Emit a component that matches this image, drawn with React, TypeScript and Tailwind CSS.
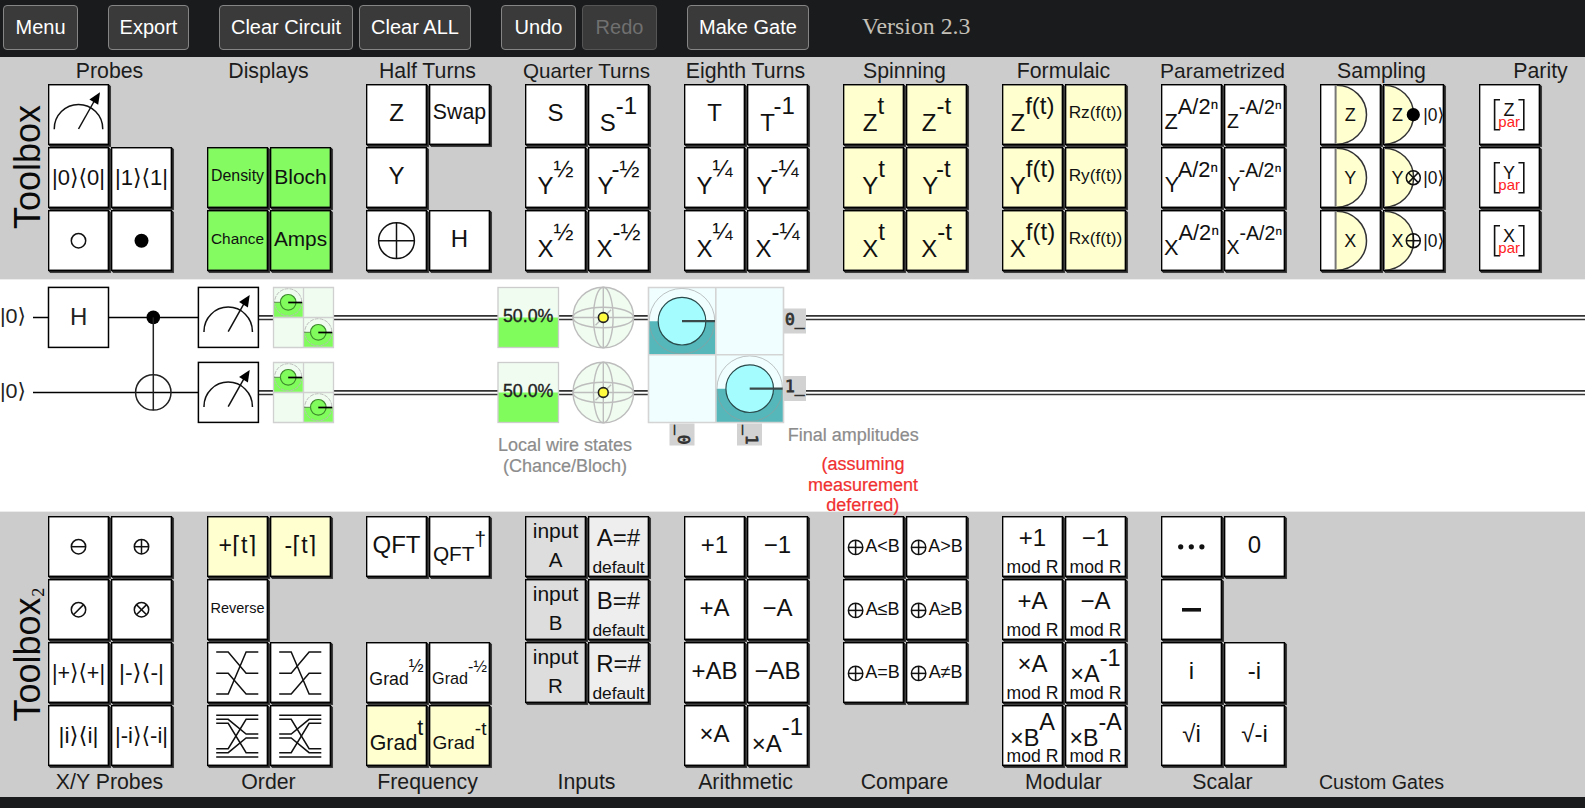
import React from "react";

type Tone = "white" | "yellow" | "green" | "input" | "fallback";

interface Gate {
  tone?: Tone;
  face: React.ReactNode;
}

const TONES: Record<Tone, string> = {
  white: "bg-white",
  yellow: "bg-[#ffffd0]",
  green: "bg-[#84fc61]",
  input: "bg-[#dddddd]",
  fallback: "bg-[#eeeeee]",
};

/* ---------- gate faces ---------- */

const Label = ({ children, size = 24 }: { children: string; size?: number }) => (
  <span className="pb-[3px] leading-none whitespace-nowrap" style={{ fontSize: size }}>
    {children}
  </span>
);

const Face = ({ children }: { children: React.ReactNode }) => (
  <svg viewBox="0 0 61 61" className="h-[61px] w-[61px] shrink-0" fill="none" stroke="none">
    {children}
  </svg>
);

const Txt = ({
  x = 30.5,
  y,
  size = 24,
  w,
  fill = "#111",
  children,
}: {
  x?: number;
  y: number;
  size?: number;
  w?: number;
  fill?: string;
  children: React.ReactNode;
}) => (
  <text
    x={x}
    y={y}
    fontSize={size}
    fill={fill}
    textAnchor="middle"
    textLength={w}
    lengthAdjust={w ? "spacingAndGlyphs" : undefined}
  >
    {children}
  </text>
);

const Power = ({ base, exp, size = 24, y }: { base: string; exp: string; size?: number; y?: number }) => (
  <Face>
    <Txt y={y ?? 30.2 + size * 0.7} size={size}>
      {base}
      <tspan dy={-size * 0.69}>{exp}</tspan>
    </Txt>
  </Face>
);

const Ket = ({ text, width }: { text: string; width: number }) => (
  <Face>
    <Txt y={37.7} size={22.5} w={width}>
      {text}
    </Txt>
  </Face>
);

const Ring = ({ x = 30.5, y = 30.7, r = 7.2, kind = "" }: { x?: number; y?: number; r?: number; kind?: string }) => {
  const d = r * 0.707;
  return (
    <g stroke="#111" strokeWidth="1.5">
      <circle cx={x} cy={y} r={r} />
      {(kind === "-" || kind === "+") && <path d={`M${x - r} ${y}H${x + r}`} />}
      {kind === "+" && <path d={`M${x} ${y - r}V${y + r}`} />}
      {(kind === "/" || kind === "x") && <path d={`M${x - d} ${y + d}L${x + d} ${y - d}`} />}
      {kind === "x" && <path d={`M${x - d} ${y - d}L${x + d} ${y + d}`} />}
    </g>
  );
};

const Control = ({ kind }: { kind: string }) => (
  <Face>
    <Ring kind={kind} />
  </Face>
);

const Meter = () => (
  <g stroke="#111" strokeWidth="1.5">
    <path d="M6.3 45.3V44.6A24.2 24.2 0 0 1 54.7 44.6V45.3" />
    <path d="M30.5 45L46.3 17" />
    <path d="M52 8.2L41.4 15.4L50.2 20.8Z" fill="#000" stroke="none" />
  </g>
);

const Shuffle = ({ paths }: { paths: number[][] }) => (
  <Face>
    <g stroke="#111" strokeWidth="1.5">
      {paths.map(([a, b], i) => (
        <path key={i} d={`M9.2 ${a}H21.2L39.1 ${b}H51.3`} />
      ))}
    </g>
  </Face>
);

const Inputs = ({ name }: { name: string }) => (
  <Face>
    <Txt y={22.3} size={21}>input</Txt>
    <Txt y={50.8} size={20.5}>{name}</Txt>
  </Face>
);

const Default = ({ name }: { name: string }) => (
  <Face>
    <Txt y={30}>{name + "=#"}</Txt>
    <Txt y={57} size={17.4}>default</Txt>
  </Face>
);

const Mod = ({ base, exp, y = 29.7, size = 24, rise = 16.5 }: { base: string; exp?: string; y?: number; size?: number; rise?: number }) => (
  <Face>
    <Txt y={y} size={size}>
      {base}
      {exp && <tspan dy={-rise}>{exp}</tspan>}
    </Txt>
    <Txt y={57} size={17.6}>mod R</Txt>
  </Face>
);

const Compare = ({ op }: { op: string }) => (
  <Face>
    <Ring x={12.6} y={31.4} r={7.2} kind="+" />
    <Txt x={39.6} y={36} size={18}>{"A" + op + "B"}</Txt>
  </Face>
);

const Detector = ({ axis }: { axis: string }) => (
  <Face>
    <path d="M15.7 1.2A30 29.5 0 0 1 15.7 60.2Z" fill="#ffffd0" />
    <path d="M16.5 1.2A30 29.5 0 0 1 16.5 60.2" stroke="#333" strokeWidth="1.5" />
    <path d="M15.6 1V60" stroke="#777" strokeWidth="2" />
    <Txt x={30.2} y={37} size={18}>{axis}</Txt>
  </Face>
);

const Reset = ({ axis, kind }: { axis: string; kind: string }) => (
  <Face>
    <path d="M1 1.2A29.6 29.5 0 0 1 1 60.2Z" fill="#ffffd0" />
    <path d="M1 1.2A29.6 29.5 0 0 1 1 60.2" stroke="#333" strokeWidth="1.5" />
    <path d="M1.4 1V60" stroke="#777" strokeWidth="1.2" />
    <Txt x={14.6} y={37} size={18}>{axis}</Txt>
    {kind === "dot" ? <circle cx={30.3} cy={30.7} r={6.6} fill="#000" /> : <Ring x={30.3} r={7} kind={kind} />}
    <Txt x={50.7} y={37} size={18} w={21}>|0⟩</Txt>
  </Face>
);

const Parity = ({ axis }: { axis: string }) => (
  <Face>
    <path d="M21 15.8H15.6V45.8H21M39.4 15.8H44.8V45.8H39.4" stroke="#111" strokeWidth="1.6" />
    <Txt x={30} y={32.4} size={18}>{axis}</Txt>
    <Txt x={30.2} y={43} size={15} fill="#f22">par</Txt>
  </Face>
);

const g = (face: React.ReactNode, tone: Tone = "white"): Gate => ({ face, tone });
const t = (text: string, size?: number, tone: Tone = "white"): Gate => g(<Label size={size}>{text}</Label>, tone);
const p = (base: string, exp: string, size?: number, tone: Tone = "white"): Gate =>
  g(<Power base={base} exp={exp} size={size} />, tone);

/* ---------- toolbox data ---------- */

interface Group {
  title: string;
  titleSize?: number;
  gates: (Gate | null)[];
}

const TOP: Group[] = [
  {
    title: "Probes",
    gates: [
      g(<Face><Meter /></Face>), null,
      g(<Ket text="|0⟩⟨0|" width={53} />), g(<Ket text="|1⟩⟨1|" width={53} />),
      g(<Control kind="" />), g(<Face><circle cx="30.5" cy="30.7" r="7" fill="#000" /></Face>),
    ],
  },
  {
    title: "Displays",
    gates: [null, null, t("Density", 15.9, "green"), t("Bloch", 21, "green"), t("Chance", 15.4, "green"), t("Amps", 20.8, "green")],
  },
  {
    title: "Half Turns",
    gates: [t("Z"), t("Swap", 21.3), t("Y"), null, g(<Face><Ring r={17.9} kind="+" /></Face>), t("H")],
  },
  {
    title: "Quarter Turns",
    titleSize: 20.6,
    gates: [t("S"), p("S", "-1"), p("Y", "½"), p("Y", "-½"), p("X", "½"), p("X", "-½")],
  },
  {
    title: "Eighth Turns",
    gates: [t("T"), p("T", "-1"), p("Y", "¼"), p("Y", "-¼"), p("X", "¼"), p("X", "-¼")],
  },
  {
    title: "Spinning",
    gates: ["Z", "Y", "X"].flatMap((a) => [p(a, "t", 24, "yellow"), p(a, "-t", 24, "yellow")]),
  },
  {
    title: "Formulaic",
    gates: ["Z", "Y", "X"].flatMap((a) => [p(a, "f(t)", 24, "yellow"), t(`R${a.toLowerCase()}(f(t))`, 17.3, "yellow")]),
  },
  {
    title: "Parametrized",
    titleSize: 21,
    gates: ["Z", "Y", "X"].flatMap((a) => [p(a, "A/2ⁿ", 21.8), p(a, "-A/2ⁿ", 19.5)]),
  },
  {
    title: "Sampling",
    gates: [["Z", "dot"], ["Y", "x"], ["X", "+"]].flatMap(([a, k]) => [g(<Detector axis={a} />), g(<Reset axis={a} kind={k} />)]),
  },
  {
    title: "Parity",
    gates: ["Z", "Y", "X"].flatMap((a) => [g(<Parity axis={a} />), null]),
  },
];

const cycle = [[10, 31.3], [31.3, 52], [52, 10]];
const interleave = [[10.3, 10.3], [14.3, 29], [18.3, 47.7], [43.7, 14.3], [47.7, 33], [52, 52]];
const flip = (paths: number[][]) => paths.map(([a, b]) => [b, a]);

const BOTTOM: Group[] = [
  {
    title: "X/Y Probes",
    gates: [
      g(<Control kind="-" />), g(<Control kind="+" />),
      g(<Control kind="/" />), g(<Control kind="x" />),
      g(<Ket text="|+⟩⟨+|" width={53} />), g(<Ket text="|-⟩⟨-|" width={45} />),
      g(<Ket text="|i⟩⟨i|" width={40} />), g(<Ket text="|-i⟩⟨-i|" width={53} />),
    ],
  },
  {
    title: "Order",
    gates: [
      g(<Face><Txt y={37.3} w={38}>+⌈t⌉</Txt></Face>, "yellow"), g(<Face><Txt y={37.3} w={32}>-⌈t⌉</Txt></Face>, "yellow"),
      t("Reverse", 14.5), null,
      g(<Shuffle paths={cycle} />), g(<Shuffle paths={flip(cycle)} />),
      g(<Shuffle paths={interleave} />), g(<Shuffle paths={flip(interleave)} />),
    ],
  },
  {
    title: "Frequency",
    gates: [
      t("QFT"), p("QFT", "†", 20.8),
      null, null,
      p("Grad", "½", 17.8), p("Grad", "-½", 16.2),
      p("Grad", "t", 21.4, "yellow"), p("Grad", "-t", 19, "yellow"),
    ],
  },
  {
    title: "Inputs",
    gates: [...["A", "B", "R"].flatMap((a) => [g(<Inputs name={a} />, "input"), g(<Default name={a} />, "fallback")]), null, null],
  },
  {
    title: "Arithmetic",
    gates: [t("+1"), t("−1"), t("+A"), t("−A"), t("+AB"), t("−AB"), t("×A"), p("×A", "-1")],
  },
  {
    title: "Compare",
    gates: [...["<", ">", "≤", "≥", "=", "≠"].map((op) => g(<Compare op={op} />)), null, null],
  },
  {
    title: "Modular",
    gates: [
      g(<Mod base="+1" />), g(<Mod base="−1" />),
      g(<Mod base="+A" />), g(<Mod base="−A" />),
      g(<Mod base="×A" />), g(<Mod base="×A" exp="-1" y={40.3} size={23.5} />),
      g(<Mod base="×B" exp="A" y={41} size={23.5} />), g(<Mod base="×B" exp="-A" y={41} size={23.2} />),
    ],
  },
  {
    title: "Scalar",
    gates: [
      g(<Face>{[19.7, 30.3, 40.9].map((x) => <circle key={x} cx={x} cy={30.8} r={2.6} fill="#111" />)}</Face>), t("0"),
      g(<Face><path d="M21 30.8H40" stroke="#111" strokeWidth="3.6" /></Face>), null,
      t("i"), t("-i"),
      t("√i"), t("√-i"),
    ],
  },
  { title: "Custom Gates", titleSize: 19.6, gates: [] },
];

/* ---------- layout pieces ---------- */

const Caption = ({ children, size = 21.3 }: { children: string; size?: number }) => (
  <div className="flex justify-center pr-px leading-6 whitespace-nowrap text-[#1c1c1c]" style={{ fontSize: size }}>
    {children}
  </div>
);

const GateGrid = ({ gates }: { gates: (Gate | null)[] }) => (
  <div className="grid grid-cols-[61px_61px] auto-rows-[61px] gap-[2px]">
    {gates.map((gate, i) =>
      gate ? (
        <div
          key={i}
          className={`flex items-center justify-center overflow-hidden outline-1 -outline-offset-1 outline-black shadow-[inset_0_0_0_1.4px_#222,1px_1px_0_0.2px_#222,1.5px_1.5px_0.5px_#444] ${TONES[gate.tone ?? "white"]}`}
        >
          {gate.face}
        </div>
      ) : (
        <div key={i} />
      )
    )}
  </div>
);

const SideTitle = ({ children }: { children: React.ReactNode }) => (
  <div className="flex w-12 shrink-0 items-center justify-center pl-[7px]">
    <div className="rotate-180 text-[36px] leading-[40px] whitespace-nowrap text-[#0a0a0a] [writing-mode:vertical-rl]">
      {children}
    </div>
  </div>
);

const BUTTONS = [
  { name: "Menu", cls: "w-[75px]" },
  { name: "Export", cls: "ml-[30px] w-[81px]" },
  { name: "Clear Circuit", cls: "ml-[30px] w-[134px]" },
  { name: "Clear ALL", cls: "ml-[6px] w-[112px]" },
  { name: "Undo", cls: "ml-[30px] w-[75px]" },
  { name: "Redo", cls: "ml-[6px] w-[75px]", disabled: true },
  { name: "Make Gate", cls: "ml-[30px] w-[122px]" },
];

const TopBar = () => (
  <header className="flex h-[57px] shrink-0 items-start bg-[#1a1b1c] pt-[5px] pl-[3px]">
    {BUTTONS.map((b) => (
      <button
        key={b.name}
        disabled={b.disabled}
        className={`h-[45px] shrink-0 rounded-[4px] border bg-[#3a3a3a] pb-[2px] text-[20px] whitespace-nowrap ${b.cls} ${
          b.disabled ? "border-[#555] text-[#707070]" : "border-[#858585] text-white"
        }`}
      >
        {b.name}
      </button>
    ))}
    <span className="ml-[53px] font-['Liberation_Serif',serif] text-[23.8px] leading-[43px] text-[#c4c0b8]">Version 2.3</span>
  </header>
);

/* ---------- circuit ---------- */

const Wire = ({ y }: { y: number }) => (
  <>
    <path d={`M33 ${y}H198`} stroke="#000" strokeWidth="1.5" />
    <path d={`M259 ${y - 1.5}H1585M259 ${y + 2.1}H1585`} stroke="#333" strokeWidth="1.6" />
    <text x="0" y={y + 5.8} fontSize="21" fill="#222" textLength="26" lengthAdjust="spacingAndGlyphs">|0⟩</text>
  </>
);

const DensityCell = ({ x, y }: { x: number; y: number }) => (
  <g>
    <path d={`M${x - 14.6} ${y}h29.2v14.6h-29.2z`} fill="#80fc5c" />
    <circle cx={x} cy={y} r="13.6" stroke="#bbb" strokeDasharray="4 1" />
    <circle cx={x} cy={y} r="7.8" fill="#80fc5c" stroke="#3d8a2c" strokeWidth="1.2" />
    <path d={`M${x - 14.6} ${y}h6.8`} stroke="#5a8a4c" strokeWidth="1" />
    <path d={`M${x} ${y + 0.2}h14`} stroke="#000" strokeWidth="1.7" />
  </g>
);

const Density = ({ y }: { y: number }) => (
  <g>
    <rect x="273.5" y={y - 30} width="60" height="60" fill="#f0fcf0" />
    <DensityCell x={288.2} y={y - 15.2} />
    <DensityCell x={318.3} y={y + 14.8} />
    <path d={`M273.5 ${y - 30}h60v60h-60zM303.5 ${y - 30}v60M273.5 ${y}h60`} stroke="#d0d0d0" strokeWidth="1.3" />
  </g>
);

const Chance = ({ y }: { y: number }) => (
  <g>
    <rect x="498" y={y - 30} width="60.5" height="60" fill="#f0fcf0" />
    <rect x="498" y={y} width="60.5" height="30" fill="#80fc5c" />
    <rect x="498" y={y - 30} width="60.5" height="60" stroke="#ccc" strokeWidth="1.3" />
    <text x="528.2" y={y + 4.8} fontSize="17.8" fill="#222" stroke="#222" strokeWidth="0.35" textAnchor="middle">50.0%</text>
  </g>
);

const Bloch = ({ y }: { y: number }) => (
  <g stroke="#bdbdbd" strokeWidth="1.4">
    <circle cx="603.3" cy={y} r="30.3" fill="#f0fcf0" />
    <ellipse cx="603.3" cy={y} rx="30.3" ry="10.3" />
    <ellipse cx="603.3" cy={y} rx="9.8" ry="30.3" />
    <path d={`M573 ${y}h60.6M603.3 ${y - 30.3}v60.6M595.5 ${y + 7.8}l15.6 -15.6`} />
    <circle cx="603.3" cy={y} r="4.9" fill="#fffc40" stroke="#222" strokeWidth="1.6" />
  </g>
);

const AmpCell = ({ x, y }: { x: number; y: number }) => (
  <g>
    <path d={`M${x - 33.5} ${y}h67.5v33.7h-67.5z`} fill="#55b7ba" />
    <circle cx={x} cy={y} r="32.8" stroke="#999" strokeOpacity="0.6" />
    <circle cx={x} cy={y} r="23.8" fill="#a4fcff" stroke="#2a4a4b" strokeWidth="1.2" />
    <path d={`M${x} ${y}h33.5`} stroke="#3a4a4b" strokeWidth="2.2" />
  </g>
);

const Amplitudes = () => (
  <g>
    <rect x="648.5" y="287.5" width="135" height="135" fill="#f0feff" />
    <AmpCell x={682} y={321.2} />
    <AmpCell x={749.7} y={388.7} />
    <path d="M648.5 287.5h135v135h-135zM715.8 287.5v135M648.5 354.8h135" stroke="#d4d4d4" strokeWidth="1.6" />
    <g fill="#d2d2d2">
      <rect x="784" y="308.5" width="22" height="25" />
      <rect x="784" y="376" width="22" height="25" />
      <rect x="669.5" y="423.5" width="25" height="22" />
      <rect x="737" y="423.5" width="25" height="22" />
    </g>
    <g fill="#333" stroke="#333" strokeWidth="0.8" fontSize="16.3" className="font-['DejaVu_Sans_Mono',monospace]">
      <text x="785" y="324.6">0_</text>
      <text x="785" y="392.2">1_</text>
      <text transform="translate(678.3,425) rotate(90)">_0</text>
      <text transform="translate(745.8,425) rotate(90)">_1</text>
    </g>
  </g>
);

const Circuit = () => (
  <section className="relative z-10 h-[233px] shrink-0 border-y border-[#ececec] bg-white">
    <svg
      viewBox="0 280 1585 231"
      className="block h-[231px] w-[1585px] overflow-visible"
      fill="none"
      stroke="none"
      aria-label="Quantum circuit"
    >
      <Wire y={317.4} />
      <Wire y={392.4} />
      <rect x="48.5" y="287.4" width="60" height="60" fill="#fff" stroke="#000" strokeWidth="1.5" />
      <text x="78.6" y="324.6" fontSize="24" fill="#222" textAnchor="middle">H</text>
      <circle cx="153.3" cy="317.4" r="6.8" fill="#000" />
      <circle cx="153.3" cy="392.4" r="17.7" stroke="#222" strokeWidth="1.5" />
      <path d="M153.3 317.4V410.2" stroke="#222" strokeWidth="1.5" />
      {[286.7, 361.7].map((y) => (
        <g key={y} transform={`translate(197.7,${y})`}>
          <rect x="0.7" y="0.7" width="60" height="60" fill="#fff" stroke="#000" strokeWidth="1.5" />
          <Meter />
        </g>
      ))}
      {[317.5, 392.5].map((y) => (
        <g key={y}>
          <Density y={y} />
          <Chance y={y} />
          <Bloch y={y} />
        </g>
      ))}
      <Amplitudes />
      <g textAnchor="middle" fontSize="18">
        <g fill="#8c8c8c" stroke="#8c8c8c" strokeWidth="0.2">
          <text x="565" y="451.3">Local wire states</text>
          <text x="565" y="472.3">(Chance/Bloch)</text>
          <text x="853.3" y="441.3">Final amplitudes</text>
        </g>
        <g fill="#f03030" stroke="#f03030" strokeWidth="0.2">
          <text x="863" y="469.5">(assuming</text>
          <text x="863" y="490.5">measurement</text>
          <text x="862.8" y="511.3">deferred)</text>
        </g>
      </g>
    </svg>
  </section>
);

export default function App() {
  return (
    <main className="flex h-[808px] w-[1585px] flex-col overflow-hidden bg-[#1a1b1c] font-['Liberation_Sans','DejaVu_Sans',sans-serif] text-[#111]">
      <TopBar />

      <section className="flex h-[222px] shrink-0 bg-[#cccccc]">
        <div className="flex shrink-0 pb-0.5">
          <SideTitle>Toolbox</SideTitle>
        </div>
        <div className="flex gap-[35px] pt-[2px]">
          {TOP.map((group) => (
            <div key={group.title} className="flex w-[124px] shrink-0 flex-col gap-px">
              <Caption size={group.titleSize}>{group.title}</Caption>
              <GateGrid gates={group.gates} />
            </div>
          ))}
        </div>
      </section>

      <Circuit />

      <section className="flex h-[285px] shrink-0 bg-[#cccccc]">
        <div className="flex shrink-0">
          <SideTitle>
            Toolbox<span className="font-['Liberation_Serif',serif] text-[30px]">₂</span>
          </SideTitle>
        </div>
        <div className="flex gap-[35px] pt-[4px]">
          {BOTTOM.map((group) => (
            <div key={group.title} className="flex h-[278px] w-[124px] shrink-0 flex-col justify-between">
              <GateGrid gates={group.gates} />
              <Caption size={group.titleSize}>{group.title}</Caption>
            </div>
          ))}
        </div>
      </section>
    </main>
  );
}
